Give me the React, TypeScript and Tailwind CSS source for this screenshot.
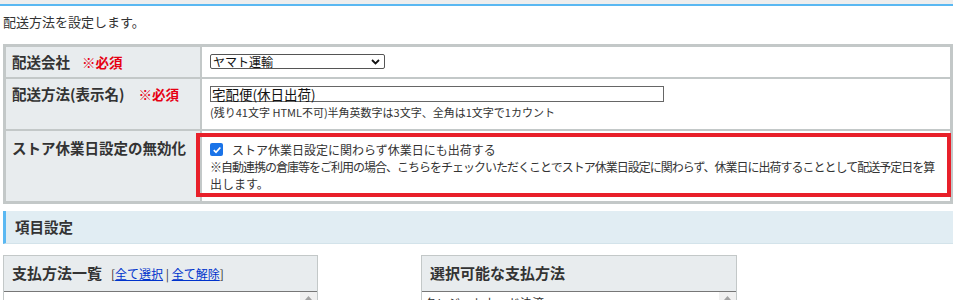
import React from "react";

const font = { fontFamily: '"Noto Sans CJK JP", "Noto Sans", sans-serif' };

export default function App() {
  return (
    <div className="w-[960px] h-[300px] overflow-hidden bg-white text-[#333]" style={font}>
      <div className="w-[953px] h-[4px] bg-[#eeeeee]" />
      <div className="w-[953px] h-[2px] bg-[#5ab8f2]" />
      <div className="ml-[3px] mt-[7px] text-[13px] leading-[18px] text-[#333]">配送方法を設定します。</div>

      <div className="ml-[3px] mt-[13px] w-[950px] border-[3px] border-[#c3c8c8] flex flex-col">
        {/* row 1 */}
        <div className="flex h-[32px] border-b-2 border-[#c3c8c8]">
          <div className="w-[196px] bg-[#e8ecee] border-r-2 border-[#c3c8c8] pl-[6px] pt-[5px] text-[14.5px] font-bold leading-[20px] flex gap-[12px]">
            <span>配送会社</span>
            <span className="text-[#e60012] text-[13.5px]">※必須</span>
          </div>
          <div className="flex-1 pl-[8px] pt-[7px]">
            <div className="w-[175px] h-[15px] border border-[#555] rounded-[2px] flex items-center justify-between pl-[2px] pr-[4px] text-[12px] leading-[13px] text-[#111]">
              <span>ヤマト運輸</span>
              <svg width="9" height="6" viewBox="0 0 9 6"><path d="M1 1 L4.5 4.5 L8 1" stroke="#111" strokeWidth="1.8" fill="none" /></svg>
            </div>
          </div>
        </div>
        {/* row 2 */}
        <div className="flex h-[52px] border-b-2 border-[#c3c8c8]">
          <div className="w-[196px] bg-[#e8ecee] border-r-2 border-[#c3c8c8] pl-[6px] pt-[5px] text-[14.5px] font-bold leading-[20px] flex gap-[14px]">
            <span>配送方法(表示名)</span>
            <span className="text-[#e60012] text-[13.5px]">※必須</span>
          </div>
          <div className="flex-1 pl-[8px] pt-[7px]">
            <div className="w-[454px] h-[16px] border border-[#666] flex items-center pl-[1px] text-[13.5px] leading-[14px] text-[#111]">宅配便(休日出荷)</div>
            <div className="mt-[2px] text-[11px] leading-[16px] text-[#333]">(残り41文字 HTML不可)半角英数字は3文字、全角は1文字で1カウント</div>
          </div>
        </div>
        {/* row 3 */}
        <div className="relative flex h-[70px]">
          <div className="w-[196px] bg-[#e8ecee] border-r-2 border-[#c3c8c8] pl-[6px] pt-[7px] text-[14.5px] font-bold leading-[20px] whitespace-nowrap">
            ストア休業日設定の無効化
          </div>
          <div className="flex-1 pl-[8px] pt-[10px] text-[12px] leading-[17px] text-[#333]">
            <div className="flex items-center gap-[9px]">
              <span className="w-[13px] h-[13px] rounded-[2px] bg-[#1a73e8] flex items-center justify-center">
                <svg width="10" height="10" viewBox="0 0 10 10"><path d="M1.8 5.2 L4 7.3 L8.3 2.5" stroke="#fff" strokeWidth="1.8" fill="none" /></svg>
              </span>
              <span>ストア休業日設定に関わらず休業日にも出荷する</span>
            </div>
            <div className="whitespace-nowrap tracking-[-1px]">※自動連携の倉庫等をご利用の場合、こちらをチェックいただくことでストア休業日設定に関わらず、休業日に出荷することとして配送予定日を算</div>
            <div>出します。</div>
          </div>
          <div className="absolute left-[190px] top-[2px] w-[755px] h-[64px] border-4 border-[#e8202a] pointer-events-none" />
        </div>
      </div>

      <div className="ml-[3px] mt-[7px] w-[950px] h-[33px] bg-[#e1edf3] border-l-[3px] border-[#5ab8f2] border-b border-b-[#d3e3ea] pl-[9px] flex items-center text-[14.5px] font-bold">
        項目設定
      </div>

      <div className="ml-[3px] mt-[11px] flex gap-[103px]">
        <div className="w-[315px] border border-[#c3c8c8] border-b-0">
          <div className="h-[35px] bg-[#e8ecee] pl-[8px] flex items-center gap-[9px]">
            <span className="text-[15px] font-bold">支払方法一覧</span>
            <span className="text-[12px] text-[#333]">[<span className="text-[#0033cc] underline">全て選択</span> | <span className="text-[#0033cc] underline">全て解除</span>]</span>
          </div>
          <div className="h-[20px] border-t border-[#777] flex justify-end">
            <div className="w-[17px] bg-[#f0f0f0] flex justify-center pt-[4px]">
              <svg width="7" height="4" viewBox="0 0 7 4"><path d="M0 4 L3.5 0 L7 4 Z" fill="#a3a3a3" /></svg>
            </div>
          </div>
        </div>
        <div className="w-[316px] border border-[#c3c8c8] border-b-0">
          <div className="h-[35px] bg-[#e8ecee] pl-[8px] flex items-center">
            <span className="text-[15px] font-bold">選択可能な支払方法</span>
          </div>
          <div className="h-[20px] border-t border-[#777] flex justify-between">
            <span className="pl-[2px] pt-[3px] text-[12px] leading-[16px] text-[#333]">クレジットカード決済</span>
            <div className="w-[17px] bg-[#f0f0f0] flex justify-center pt-[4px]">
              <svg width="7" height="4" viewBox="0 0 7 4"><path d="M0 4 L3.5 0 L7 4 Z" fill="#a3a3a3" /></svg>
            </div>
          </div>
        </div>
      </div>
    </div>
  );
}
